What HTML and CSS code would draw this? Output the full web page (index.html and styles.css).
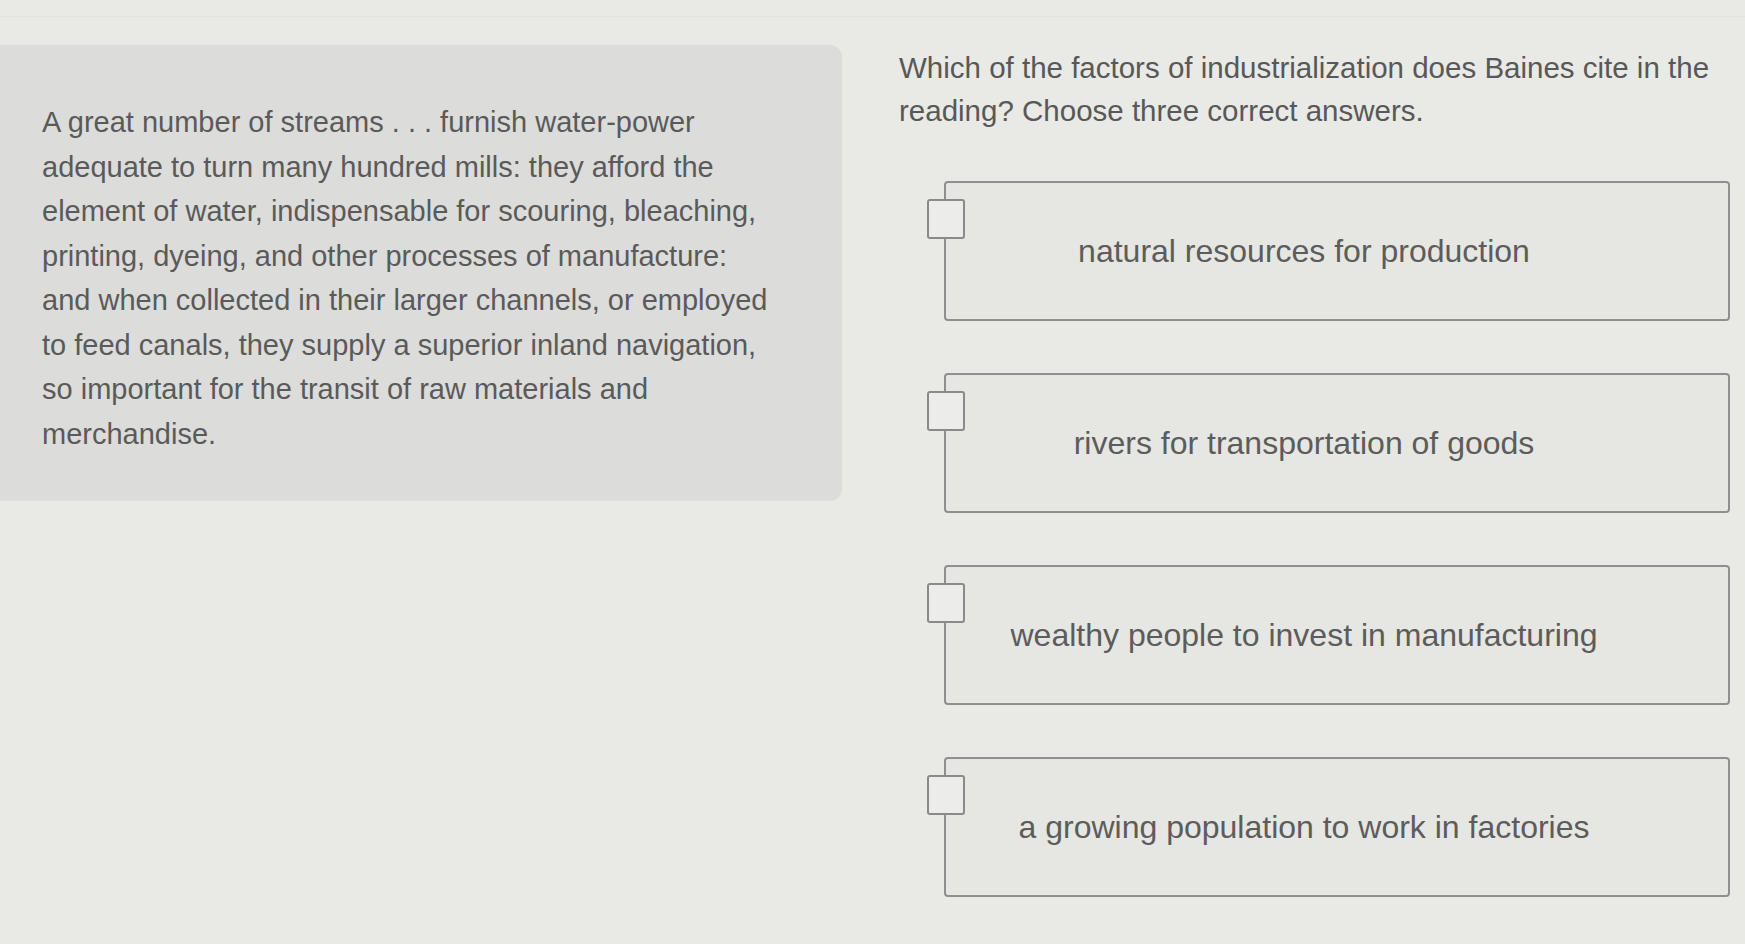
FILE: index.html
```html
<!DOCTYPE html>
<html lang="en">
<head>
<meta charset="utf-8">
<title>Reading question</title>
<link rel="stylesheet" href="styles.css">
</head>
<body>
<div class="page">
  <section class="passage">
    <p>A great number of streams . . . furnish water-power<br>
    adequate to turn many hundred mills: they afford the<br>
    element of water, indispensable for scouring, bleaching,<br>
    printing, dyeing, and other processes of manufacture:<br>
    and when collected in their larger channels, or employed<br>
    to feed canals, they supply a superior inland navigation,<br>
    so important for the transit of raw materials and<br>
    merchandise.</p>
  </section>
  <section class="question">
    <p class="prompt">Which of the factors of industrialization does Baines cite in the reading? Choose three correct answers.</p>
    <div class="options">
      <label class="option"><span class="check"></span><span class="label">natural resources for production</span></label>
      <label class="option"><span class="check"></span><span class="label">rivers for transportation of goods</span></label>
      <label class="option"><span class="check"></span><span class="label">wealthy people to invest in manufacturing</span></label>
      <label class="option"><span class="check"></span><span class="label">a growing population to work in factories</span></label>
      <label class="option"><span class="check"></span></label>
    </div>
  </section>
</div>
</body>
</html>
```
FILE: styles.css
```css
html, body {
  margin: 0;
  padding: 0;
}

body {
  background: #e9e9e5;
  font-family: "Liberation Sans", Arial, sans-serif;
  color: #555;
  height: 944px;
  overflow: hidden;
}

.page {
  display: flex;
  align-items: flex-start;
  border-top: 1px solid #e2e2de;
  margin-top: 16px;
}

.passage {
  width: 842px;
  height: 456px;
  flex: none;
  box-sizing: border-box;
  margin-top: 28px;
  padding: 55px 0 0 42px;
  background: #dcdcdb;
  border-radius: 0 12px 12px 0;
}

.passage p {
  margin: 0;
  font-size: 29px;
  line-height: 44.5px;
  color: #5a5a5a;
  white-space: nowrap;
}

.question {
  margin-left: 57px;
  padding-top: 29px;
  width: 846px;
}

.prompt {
  margin: 0;
  font-size: 29.5px;
  line-height: 43px;
  color: #585858;
}

.options {
  display: flex;
  flex-direction: column;
  gap: 52px;
  margin-top: 49px;
  padding-left: 45px;
}

.option {
  position: relative;
  display: flex;
  align-items: center;
  justify-content: center;
  height: 140px;
  width: 786px;
  flex: none;
  box-sizing: border-box;
  padding-right: 66px;
  border: 2px solid #8f8f8f;
  border-radius: 4px;
  background: #e6e6e2;
}

.check {
  position: absolute;
  left: -19px;
  top: 16px;
  width: 38px;
  height: 40px;
  box-sizing: border-box;
  border: 2px solid #8a8a8a;
  border-radius: 3px;
  background: #ececea;
}

.label {
  font-size: 32px;
  color: #5c5c5c;
}
```
